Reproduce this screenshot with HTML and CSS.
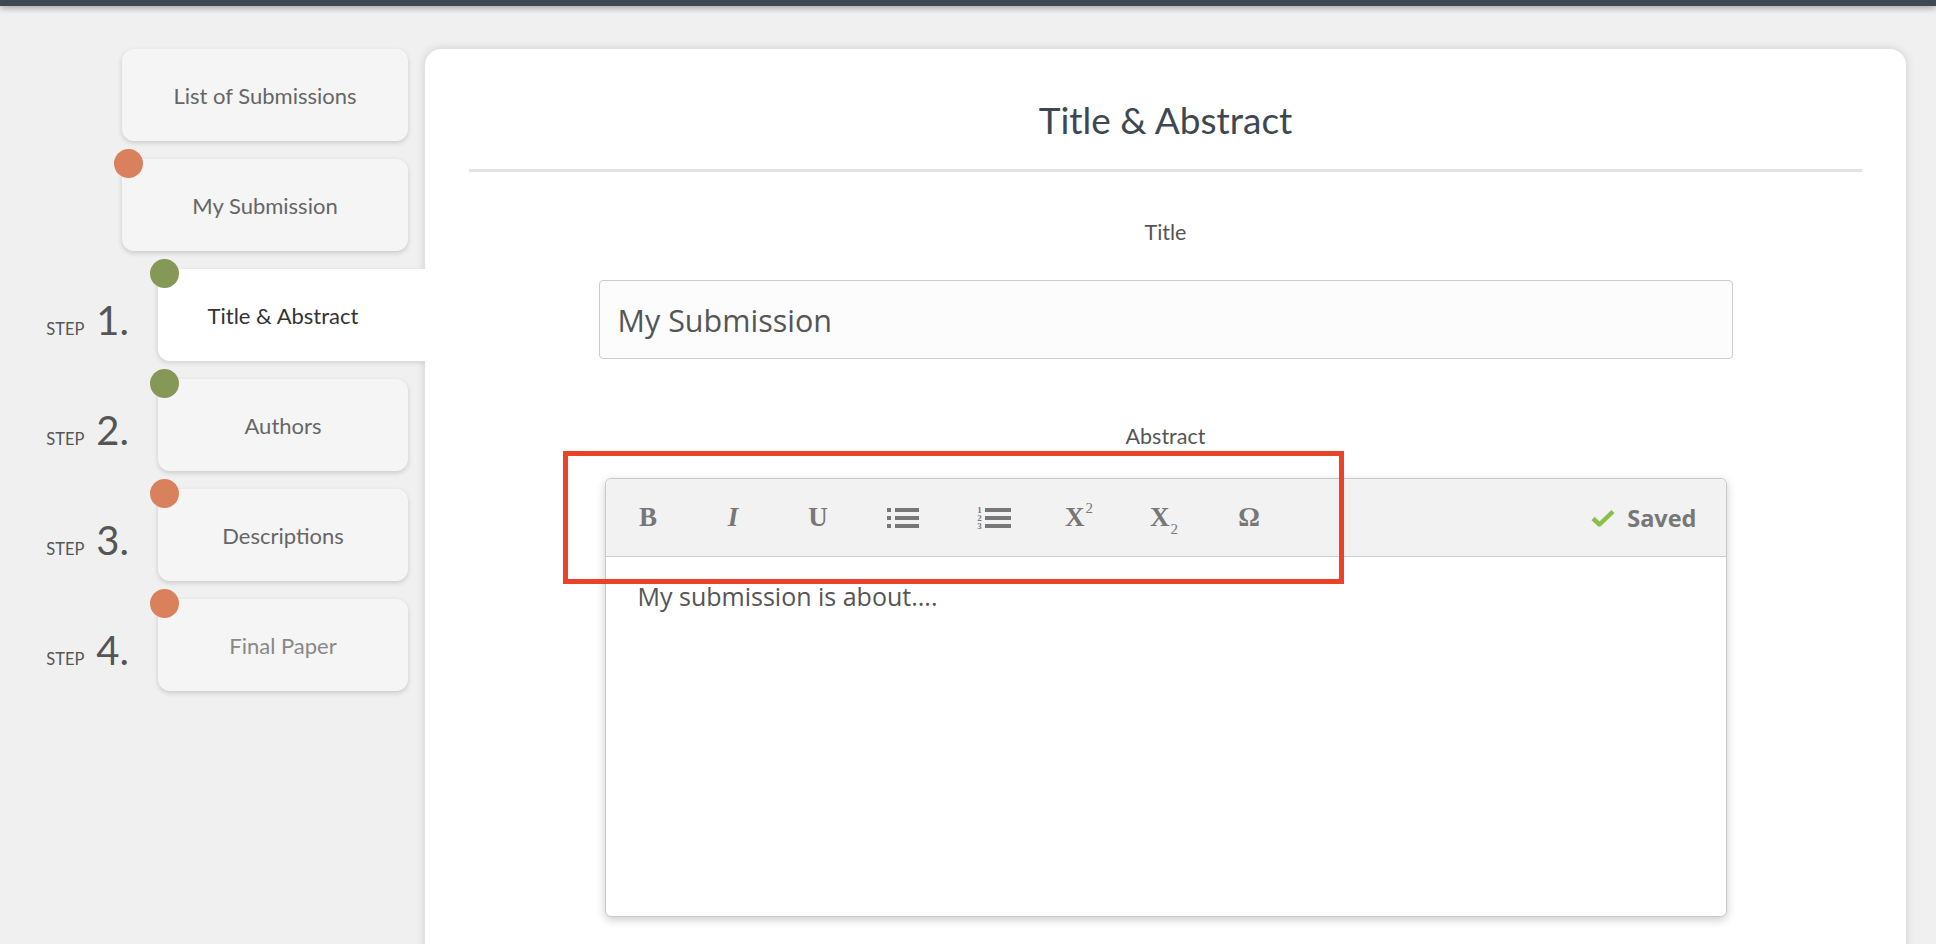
FILE: index.html
```html
<!DOCTYPE html>
<html lang="en">
<head>
    <meta charset="UTF-8">
    <meta name="viewport" content="width=device-width, initial-scale=1.0">
    <title>Title &amp; Abstract</title>
    <link rel="stylesheet" href="styles.css">
</head>
<body>
    <div class="topbar"></div>

    <div class="layout">
        <nav class="steps">
            <div class="nav-row">
                <a class="nav-card wide">List of Submissions</a>
            </div>
            <div class="nav-row">
                <a class="nav-card wide dot todo">My Submission</a>
            </div>
            <div class="nav-row">
                <div class="step-label"><span>Step</span><b>1.</b></div>
                <a class="nav-card active dot done">Title &amp; Abstract</a>
            </div>
            <div class="nav-row">
                <div class="step-label"><span>Step</span><b>2.</b></div>
                <a class="nav-card dot done">Authors</a>
            </div>
            <div class="nav-row">
                <div class="step-label"><span>Step</span><b>3.</b></div>
                <a class="nav-card dot todo">Descriptions</a>
            </div>
            <div class="nav-row">
                <div class="step-label"><span>Step</span><b>4.</b></div>
                <a class="nav-card dot todo disabled">Final Paper</a>
            </div>
        </nav>

        <main class="panel">
            <div class="panel-head">
                <h1>Title &amp; Abstract</h1>
            </div>

            <label class="field-label" for="title">Title</label>
            <input class="text-input" id="title" type="text" value="My Submission">

            <div class="field-label abstract-label">Abstract</div>
            <div class="editor">
                <div class="toolbar">
                    <span class="tool">B</span>
                    <span class="tool italic">I</span>
                    <span class="tool">U</span>
                    <span class="tool">
                        <svg width="32" height="22" viewBox="0 0 32 22">
                            <rect x="0" y="1" width="4" height="4" fill="#777"/>
                            <rect x="0" y="9" width="4" height="4" fill="#777"/>
                            <rect x="0" y="17" width="4" height="4" fill="#777"/>
                            <rect x="8" y="1" width="24" height="4" fill="#777"/>
                            <rect x="8" y="9" width="24" height="4" fill="#777"/>
                            <rect x="8" y="17" width="24" height="4" fill="#777"/>
                        </svg>
                    </span>
                    <span class="tool num-list">
                        <span class="digits"><i>1</i><i>2</i><i>3</i></span>
                        <svg width="26" height="22" viewBox="0 0 26 22">
                            <rect x="0" y="1" width="26" height="4" fill="#777"/>
                            <rect x="0" y="9" width="26" height="4" fill="#777"/>
                            <rect x="0" y="17" width="26" height="4" fill="#777"/>
                        </svg>
                    </span>
                    <span class="tool">X<sup>2</sup></span>
                    <span class="tool">X<sub>2</sub></span>
                    <span class="tool">&Omega;</span>

                    <span class="saved">
                        <svg width="24" height="18" viewBox="0 0 24 18">
                            <path d="M2 9.5 L8.5 15.5 L22 2.5" fill="none" stroke="#8cbf45" stroke-width="4.5" stroke-linejoin="round"/>
                        </svg>
                        Saved
                    </span>
                </div>
                <div class="editor-body">My submission is about....</div>
                <div class="highlight"></div>
            </div>
        </main>
    </div>
</body>
</html>
```

FILE: styles.css
```css
body {
    margin: 0;
    background-color: #f0f0f0;
    font-family: 'Lato', 'Open Sans', sans-serif;
    color: #555;
    overflow: hidden;
}

.topbar {
    height: 6px;
    background: #3e4852;
    position: relative;
    z-index: 5;
    box-shadow: 0 2px 6px rgba(0, 0, 0, 0.35);
}

.layout {
    display: flex;
    gap: 17px;
    padding: 43px 30px 0 0;
}

/* left navigation */

.steps {
    width: 408px;
    flex-shrink: 0;
}

.nav-row {
    display: flex;
    justify-content: flex-end;
    align-items: center;
    margin-bottom: 18px;
}

.nav-card {
    position: relative;
    box-sizing: border-box;
    width: 250px;
    height: 92px;
    display: flex;
    align-items: center;
    justify-content: center;
    background: #f5f5f5;
    border-radius: 12px;
    box-shadow: 0 2px 5px rgba(0, 0, 0, 0.16);
    font-size: 22px;
    color: #666;
    cursor: pointer;
}

.nav-card.wide {
    width: 286px;
}

.nav-card.active {
    width: 268px;
    margin-right: -18px;
    padding-right: 18px;
    background: #fff;
    color: #333;
    border-radius: 12px 0 0 12px;
    z-index: 2;
    box-shadow: -1px 2px 5px rgba(0, 0, 0, 0.12);
    clip-path: inset(-10px 0 -10px -10px);
}

.nav-card.disabled {
    color: #888;
}

.nav-card.dot:before {
    content: '';
    position: absolute;
    left: -8px;
    top: -10px;
    width: 29px;
    height: 29px;
    border-radius: 50%;
}

.nav-card.todo:before {
    background: #d9805d;
}

.nav-card.done:before {
    background: #859857;
}

.step-label {
    display: flex;
    align-items: baseline;
    gap: 12px;
    margin-right: 29px;
    padding-top: 10px;
    color: #555;
}

.step-label span {
    font-size: 16.5px;
    text-transform: uppercase;
}

.step-label b {
    font-size: 40px;
    font-weight: 400;
    line-height: 1;
}

/* main panel */

.panel {
    flex: 1;
    min-height: 960px;
    background: #fff;
    border-radius: 16px;
    box-shadow: 0 0 10px rgba(0, 0, 0, 0.15);
    padding: 0 44px;
    position: relative;
    z-index: 1;
}

.panel-head {
    padding: 49px 0 27px;
    border-bottom: 3px solid #e3e3e3;
}

.panel-head h1 {
    margin: 0;
    text-align: center;
    font-size: 37px;
    font-weight: 400;
    line-height: 44px;
    color: #3d4852;
}

.field-label {
    display: block;
    text-align: center;
    font-size: 21.5px;
    line-height: 26px;
    color: #555;
    margin: 47px 0 35px;
}

.abstract-label {
    margin: 64px 0 29px;
}

.text-input {
    display: block;
    box-sizing: border-box;
    width: 1134px;
    height: 79px;
    margin: 0 auto;
    padding: 0 18px;
    border: 1px solid #cccccc;
    border-radius: 4px;
    background: #fcfcfc;
    font-family: 'Open Sans', sans-serif;
    font-size: 30.5px;
    color: #555;
    outline: none;
}

/* abstract editor */

.editor {
    position: relative;
    width: 1122px;
    box-sizing: border-box;
    margin: 0 auto;
    border: 1px solid #c8c8c8;
    border-radius: 6px;
    box-shadow: 0 3px 10px rgba(0, 0, 0, 0.2);
    background: #fff;
}

.toolbar {
    display: flex;
    align-items: center;
    height: 77px;
    padding: 0 29px 0 0;
    background: #f2f2f2;
    border-bottom: 1px solid #cccccc;
    border-radius: 6px 6px 0 0;
}

.tool {
    width: 85px;
    display: flex;
    align-items: center;
    justify-content: center;
    font-family: 'Liberation Serif', serif;
    font-weight: bold;
    font-size: 27px;
    color: #777;
    line-height: 1;
}

.tool.italic {
    font-style: italic;
}

.tool sup,
.tool sub {
    font-size: 15px;
    font-weight: normal;
    margin-left: 1px;
}

.tool sup {
    align-self: flex-start;
    margin-top: -3px;
}

.tool sub {
    align-self: flex-end;
    margin-bottom: -6px;
}

.num-list {
    gap: 3px;
    margin-left: 6px;
}

.digits {
    display: flex;
    flex-direction: column;
    font-size: 9px;
    line-height: 8px;
}

.digits i {
    font-style: normal;
}

.saved {
    margin-left: auto;
    display: flex;
    align-items: center;
    gap: 12px;
    font-family: 'Open Sans', sans-serif;
    font-weight: bold;
    font-size: 23.5px;
    color: #777;
}

.editor-body {
    height: 359px;
    box-sizing: border-box;
    padding: 22px 32px;
    font-family: 'Open Sans', sans-serif;
    font-size: 25px;
    line-height: 34px;
    color: #555;
}

.highlight {
    position: absolute;
    left: -43px;
    top: -28px;
    width: 781px;
    height: 133px;
    box-sizing: border-box;
    border: 5px solid #ea4229;
    pointer-events: none;
}
```
